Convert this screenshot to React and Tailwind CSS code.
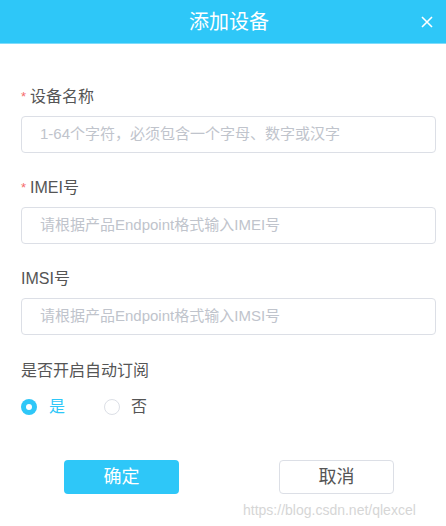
export default function App() {
  const font = { fontFamily: '"Liberation Sans", "Noto Sans CJK SC", sans-serif' };
  return (
    <div className="w-[446px] h-[526px] bg-white relative overflow-hidden" style={font}>
      <div className="h-[44px] bg-[#2ec7f8] border-b border-[#7fdcfb] flex items-center relative">
        <div className="flex-1 text-center pl-[12px] text-white text-[20px] leading-none">添加设备</div>
        <svg className="absolute left-[421px] top-[16px]" width="12" height="12" viewBox="0 0 12 12">
          <path d="M1 1L11 11M11 1L1 11" stroke="#fff" strokeWidth="1.6" />
        </svg>
      </div>

      <div className="px-[21px] pt-[43px]">
        <div className="h-[20px] flex items-center text-[16px] text-[#555]">
          <span className="text-[#f56c6c] mr-[4px] text-[13px]">*</span>设备名称
        </div>
        <div className="mt-[9px] h-[37px] w-[415px] border border-[#dcdfe6] rounded-[4px] flex items-center pl-[18px] text-[15px] text-[#c0c4cc]">
          1-64个字符，必须包含一个字母、数字或汉字
        </div>

        <div className="mt-[25px] h-[20px] flex items-center text-[16px] text-[#555]">
          <span className="text-[#f56c6c] mr-[4px] text-[13px]">*</span>IMEI号
        </div>
        <div className="mt-[9px] h-[37px] w-[415px] border border-[#dcdfe6] rounded-[4px] flex items-center pl-[18px] text-[15px] text-[#c0c4cc]">
          请根据产品Endpoint格式输入IMEI号
        </div>

        <div className="mt-[25px] h-[20px] flex items-center text-[16px] text-[#555]">IMSI号</div>
        <div className="mt-[9px] h-[37px] w-[415px] border border-[#dcdfe6] rounded-[4px] flex items-center pl-[18px] text-[15px] text-[#c0c4cc]">
          请根据产品Endpoint格式输入IMSI号
        </div>

        <div className="mt-[26px] h-[20px] flex items-center text-[16px] text-[#555]">是否开启自动订阅</div>
        <div className="mt-[16px] h-[20px] flex items-center text-[16px]">
          <span className="w-[16px] h-[16px] rounded-full bg-[#2ec7f8] flex items-center justify-center">
            <span className="w-[6px] h-[6px] rounded-full bg-white" />
          </span>
          <span className="ml-[12px] text-[#2ec7f8]">是</span>
          <span className="ml-[39px] w-[16px] h-[16px] rounded-full border border-[#dcdfe6] bg-white" />
          <span className="ml-[11px] text-[#555]">否</span>
        </div>

        <div className="mt-[43px] flex pl-[43px] gap-[100px]">
          <div className="w-[115px] h-[34px] rounded-[4px] bg-[#2ec7f8] text-white text-[18px] flex items-center justify-center">确定</div>
          <div className="w-[115px] h-[34px] rounded-[4px] border border-[#dcdfe6] text-[#555] text-[18px] flex items-center justify-center">取消</div>
        </div>
      </div>

      <div className="absolute left-[243px] top-[500px] text-[14px] text-[#d6d6d6]">
        https://blog.csdn.net/qlexcel
      </div>
    </div>
  );
}
